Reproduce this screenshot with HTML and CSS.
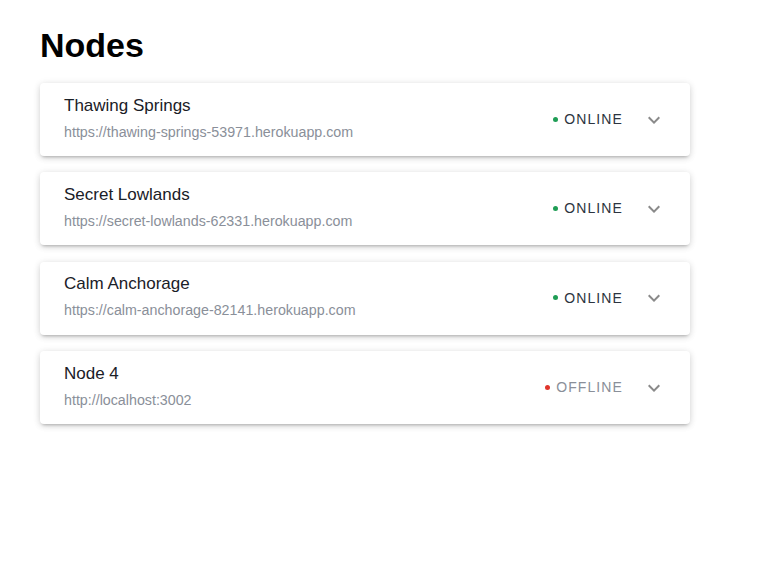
FILE: index.html
```html
<!DOCTYPE html>
<html>
<head>
<meta charset="utf-8">
<link rel="stylesheet" href="styles.css">
</head>
<body>
<div class="page">
  <h1 class="title">Nodes</h1>
  <div class="list">
    <div class="card">
      <div class="info">
        <div class="name">Thawing Springs</div>
        <div class="url">https://thawing-springs-53971.herokuapp.com</div>
      </div>
      <div class="status online"><span class="dot"></span>ONLINE</div>
      <svg class="chev" width="24" height="24" viewBox="0 0 24 24"><path d="M16.59 8.59 12 13.17 7.41 8.59 6 10l6 6 6-6z"/></svg>
    </div>
    <div class="card">
      <div class="info">
        <div class="name">Secret Lowlands</div>
        <div class="url">https://secret-lowlands-62331.herokuapp.com</div>
      </div>
      <div class="status online"><span class="dot"></span>ONLINE</div>
      <svg class="chev" width="24" height="24" viewBox="0 0 24 24"><path d="M16.59 8.59 12 13.17 7.41 8.59 6 10l6 6 6-6z"/></svg>
    </div>
    <div class="card">
      <div class="info">
        <div class="name">Calm Anchorage</div>
        <div class="url">https://calm-anchorage-82141.herokuapp.com</div>
      </div>
      <div class="status online"><span class="dot"></span>ONLINE</div>
      <svg class="chev" width="24" height="24" viewBox="0 0 24 24"><path d="M16.59 8.59 12 13.17 7.41 8.59 6 10l6 6 6-6z"/></svg>
    </div>
    <div class="card">
      <div class="info">
        <div class="name">Node 4</div>
        <div class="url">http://localhost:3002</div>
      </div>
      <div class="status offline"><span class="dot"></span>OFFLINE</div>
      <svg class="chev" width="24" height="24" viewBox="0 0 24 24"><path d="M16.59 8.59 12 13.17 7.41 8.59 6 10l6 6 6-6z"/></svg>
    </div>
  </div>
</div>
</body>
</html>
```
FILE: styles.css
```css
html, body {
  margin: 0;
  padding: 0;
  background: #fff;
  font-family: "Liberation Sans", Arial, sans-serif;
}
.page {
  padding: 24px 40px;
  width: 650px;
}
.title {
  margin: 0 0 17px 0;
  font-size: 34px;
  font-weight: 700;
  line-height: 42px;
  color: #000;
}
.list {
  display: flex;
  flex-direction: column;
  gap: 16.4px;
}
.card {
  display: flex;
  align-items: center;
  height: 73px;
  box-sizing: border-box;
  padding: 0 24px 0 24px;
  background: #fff;
  border-radius: 4px;
  box-shadow: 0 3px 3px -2px rgba(0,0,0,0.2), 0 2px 6px 0 rgba(0,0,0,0.12), 0 1px 8px 0 rgba(0,0,0,0.08);
}
.info {
  flex: 1;
  display: flex;
  flex-direction: column;
  gap: 6px;
  padding-bottom: 4px;
}
.name {
  font-size: 17px;
  line-height: 22px;
  color: #1a2027;
}
.url {
  font-size: 14.25px;
  line-height: 18px;
  color: #8a8f99;
}
.status {
  display: flex;
  align-items: center;
  font-size: 14px;
  letter-spacing: 1.1px;
  margin-right: 19px;
  padding-bottom: 1px;
}
.status.online { color: #2c3440; }
.status.offline { color: #8a8f99; }
.dot {
  width: 5px;
  height: 5px;
  border-radius: 50%;
  margin-right: 6px;
}
.online .dot { background: #1f9d55; }
.offline .dot { background: #e0352b; }
.chev {
  fill: #8a8a8a;
}
```
